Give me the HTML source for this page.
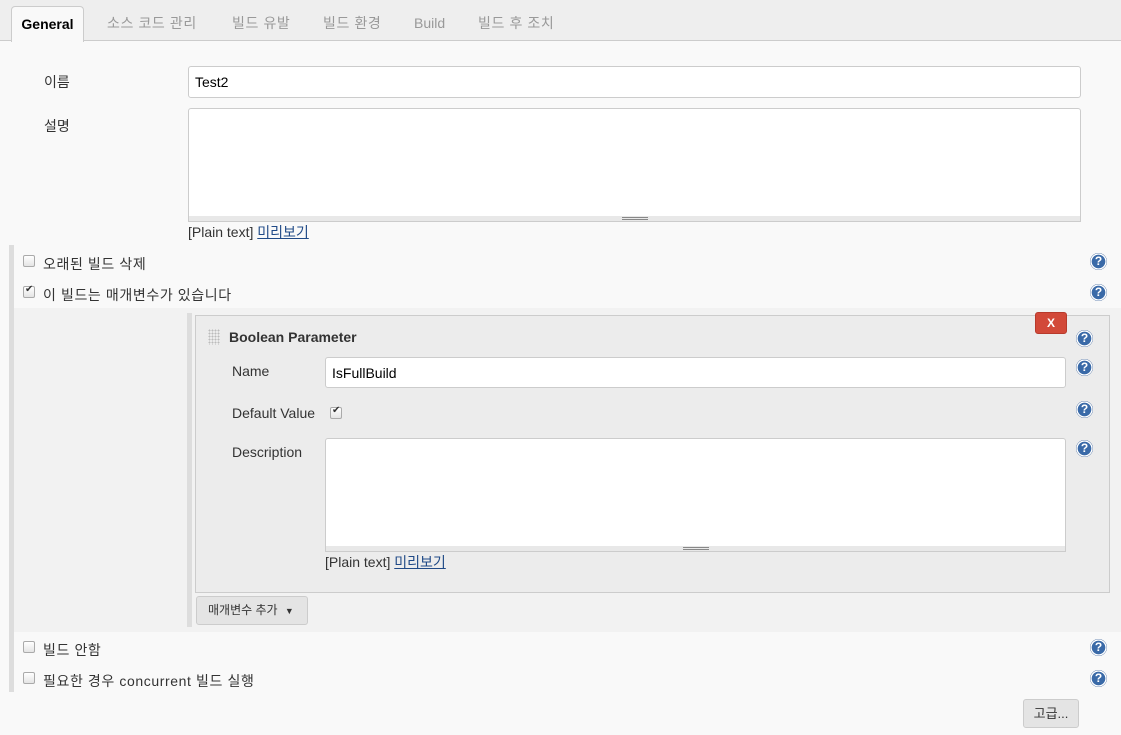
<!DOCTYPE html>
<html><head><meta charset="utf-8"><style>
*{box-sizing:border-box;margin:0;padding:0}
body{width:1121px;height:735px;background:#f9f9f9;font-family:"Liberation Sans","Noto Sans CJK KR",sans-serif;font-size:14px;color:#333;position:relative;overflow:hidden}
.a{position:absolute}
.k{letter-spacing:0.6px}
.tabs{left:0;top:0;width:1121px;height:41px;background:#eee;border-bottom:1px solid #ccc}
.tab{top:6px;height:36px;line-height:34px;color:#999;font-size:14px}
.tab.on{left:11px;width:73px;background:#f9f9f9;border:1px solid #ccc;border-bottom:none;border-radius:4px 4px 0 0;color:#000;font-weight:bold;text-align:center}
.inp{background:#fff;border:1px solid #ccc;border-radius:3px}
.grip{height:6px;background:#e8e8e8;border:1px solid #ccc;border-top:none}
.grip i{position:absolute;left:50%;margin-left:-13px;top:1px;width:26px;height:3px;border-top:1px solid #888;border-bottom:1px solid #888}
.cb{width:12px;height:12px;border:1px solid #aaa;border-radius:2px;background:linear-gradient(#fff,#e4e4e4)}
.cb.c::after{content:"✔";position:absolute;left:1px;top:-3px;font-size:10px;color:#333}
.help{width:17px;height:17px;border-radius:50%;background:radial-gradient(circle,#3a6aa8 55%,#fff 58%,#fff 66%,#24508f 70%);color:#fff;font-weight:bold;font-size:12px;line-height:17px;text-align:center}
a{color:#204a87}
</style></head><body>
<div class="a tabs"></div>
<div class="a tab on">General</div>
<div class="a tab k" style="left:107px">소스 코드 관리</div>
<div class="a tab k" style="left:232px">빌드 유발</div>
<div class="a tab k" style="left:323px">빌드 환경</div>
<div class="a tab" style="left:414px">Build</div>
<div class="a tab k" style="left:478px">빌드 후 조치</div>

<div class="a" style="left:44px;top:72px">이름</div>
<div class="a inp" style="left:188px;top:66px;width:893px;height:32px;padding:7px 6px;color:#000">Test2</div>
<div class="a" style="left:44px;top:116px">설명</div>
<div class="a inp" style="left:188px;top:108px;width:893px;height:109px;border-radius:3px 3px 0 0"></div>
<div class="a grip" style="left:188px;top:216px;width:893px"><i></i></div>
<div class="a" style="left:188px;top:222px">[Plain text] <a href="#">미리보기</a></div>

<div class="a" style="left:9px;top:245px;width:5px;height:447px;background:#ddd"></div>
<div class="a cb" style="left:23px;top:255px"></div>
<div class="a k" style="left:43px;top:254px">오래된 빌드 삭제</div>
<div class="a help" style="left:1090px;top:253px">?</div>
<div class="a cb c" style="left:23px;top:286px"></div>
<div class="a k" style="left:43px;top:285px">이 빌드는 매개변수가 있습니다</div>
<div class="a help" style="left:1090px;top:284px">?</div>

<div class="a" style="left:14px;top:308px;width:1107px;height:324px;background:#f2f2f2"></div>
<div class="a" style="left:187px;top:313px;width:5px;height:314px;background:#ddd"></div>
<div class="a" style="left:195px;top:315px;width:915px;height:278px;background:#ececec;border:1px solid #ccc"></div>
<div class="a" style="left:208px;top:329px;width:12px;height:16px;background-image:radial-gradient(#bbb 40%,transparent 45%);background-size:3px 3px"></div>
<div class="a" style="left:229px;top:329px;font-weight:bold">Boolean Parameter</div>
<div class="a" style="left:1035px;top:312px;width:32px;height:22px;background:#d24939;border:1px solid #b73a2c;border-radius:3px;color:#fff;font-weight:bold;font-size:12px;text-align:center;line-height:20px">X</div>
<div class="a help" style="left:1076px;top:330px">?</div>
<div class="a" style="left:232px;top:363px">Name</div>
<div class="a inp" style="left:325px;top:357px;width:741px;height:31px;padding:7px 6px;color:#000">IsFullBuild</div>
<div class="a help" style="left:1076px;top:359px">?</div>
<div class="a" style="left:232px;top:405px">Default Value</div>
<div class="a cb c" style="left:330px;top:407px"></div>
<div class="a help" style="left:1076px;top:401px">?</div>
<div class="a" style="left:232px;top:444px">Description</div>
<div class="a inp" style="left:325px;top:438px;width:741px;height:109px;border-radius:3px 3px 0 0"></div>
<div class="a grip" style="left:325px;top:546px;width:741px"><i></i></div>
<div class="a help" style="left:1076px;top:440px">?</div>
<div class="a" style="left:325px;top:552px">[Plain text] <a href="#">미리보기</a></div>
<div class="a" style="left:196px;top:596px;width:112px;height:29px;background:#e4e4e4;border:1px solid #ccc;border-radius:3px;font-size:12px;line-height:27px;padding-left:11px">매개변수 추가 <span style="font-size:9px;margin-left:4px">▼</span></div>

<div class="a cb" style="left:23px;top:641px"></div>
<div class="a k" style="left:43px;top:640px">빌드 안함</div>
<div class="a help" style="left:1090px;top:639px">?</div>
<div class="a cb" style="left:23px;top:672px"></div>
<div class="a k" style="left:43px;top:671px">필요한 경우 concurrent 빌드 실행</div>
<div class="a help" style="left:1090px;top:670px">?</div>
<div class="a" style="left:1023px;top:699px;width:56px;height:29px;background:#e4e4e4;border:1px solid #ccc;border-radius:3px;font-size:13px;line-height:27px;text-align:center">고급...</div>
</body></html>
